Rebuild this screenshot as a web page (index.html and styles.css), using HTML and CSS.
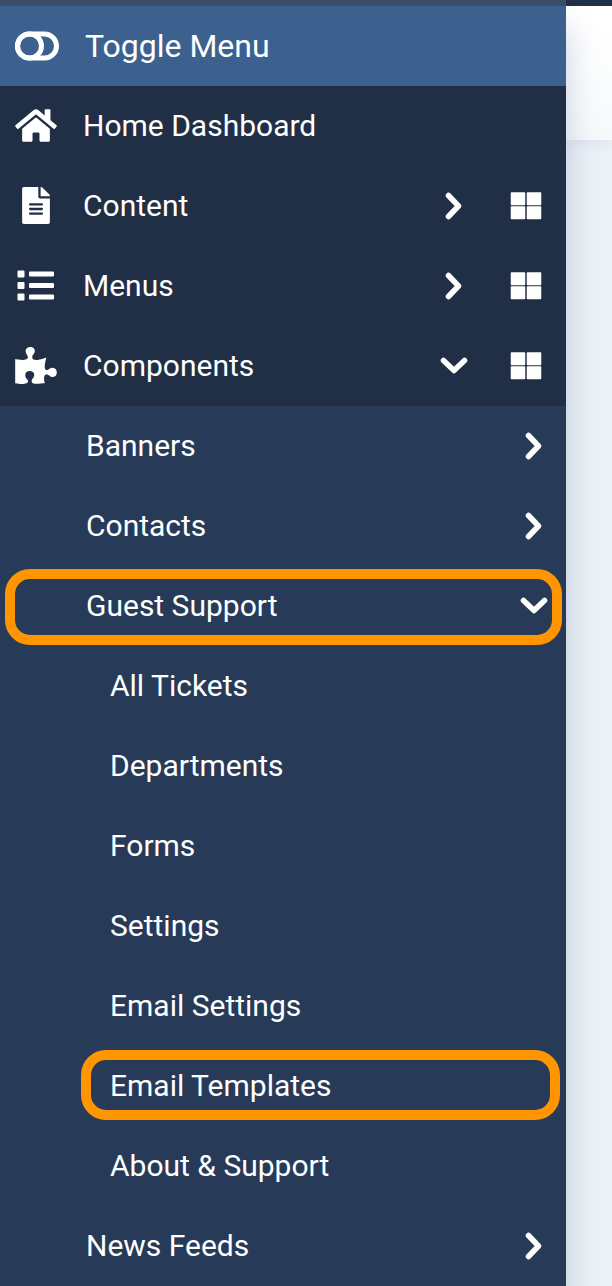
FILE: index.html
```html
<!DOCTYPE html>
<html lang="en">
<head>
    <meta charset="UTF-8">
    <meta name="viewport" content="width=device-width, initial-scale=1.0">
    <title>Home Dashboard</title>
    <link rel="stylesheet" href="styles.css">
</head>
<body>

    <!-- Shared icons -->
    <svg class="sprite" aria-hidden="true">
        <symbol id="chevron-right" viewBox="0 0 28 28">
            <path d="M8.500 3.500l10 10.500-10 10.500" fill="none" stroke="currentColor" stroke-width="5.500" stroke-linecap="round" stroke-linejoin="round"/>
        </symbol>
        <symbol id="chevron-down" viewBox="0 0 28 28">
            <path d="M3.500 8.500L14 18.500 24.500 8.500" fill="none" stroke="currentColor" stroke-width="5.500" stroke-linecap="round" stroke-linejoin="round"/>
        </symbol>
        <symbol id="grid" viewBox="0 0 32 28">
            <path d="M1.500 1h13v11.500h-13zM17.500 1h13v11.500h-13zM1.500 15h13v11.500h-13zM17.500 15h13v11.500h-13z" fill="currentColor" stroke="currentColor" stroke-width="1.500" stroke-linejoin="round"/>
        </symbol>
    </svg>

    <div class="topbar"><div class="topbar-brand"></div></div>

    <div class="wrapper">
        <nav class="sidebar" aria-label="Main menu">
            <button type="button" class="row toggle">
                <svg class="icon icon-toggle" viewBox="0 0 44 30">
                    <rect x="2.500" y="3" width="39" height="24" rx="12" fill="none" stroke="currentColor" stroke-width="5"/>
                    <circle cx="14.500" cy="15" r="12" fill="none" stroke="currentColor" stroke-width="5"/>
                </svg>
                <span class="label">Toggle Menu</span>
            </button>

            <ul class="menu">
                <li class="row">
                    <a href="#" class="link">
                        <svg class="icon" viewBox="0 0 576 512"><path fill="currentColor" d="M280.370 148.260L96 300.110V464a16 16 0 0 0 16 16l112.060-.29a16 16 0 0 0 15.920-16V368a16 16 0 0 1 16-16h64a16 16 0 0 1 16 16v95.640a16 16 0 0 0 16 16.050L464 480a16 16 0 0 0 16-16V300L295.670 148.260a12.190 12.190 0 0 0-15.300 0zM571.600 251.470L488 182.560V44.050a12 12 0 0 0-12-12h-56a12 12 0 0 0-12 12v72.610L318.470 43a48 48 0 0 0-61 0L4.340 251.470a12 12 0 0 0-1.600 16.900l25.500 31A12 12 0 0 0 45.150 301l235.220-193.740a12.190 12.190 0 0 1 15.300 0L530.900 301a12 12 0 0 0 16.900-1.600l25.500-31a12 12 0 0 0-1.700-16.930z"/></svg>
                        <span class="label">Home Dashboard</span>
                    </a>
                </li>
                <li class="row">
                    <button type="button" class="link" aria-expanded="false">
                        <svg class="icon" viewBox="-96 0 576 512"><path fill="currentColor" d="M224 136V0H24C10.700 0 0 10.700 0 24v464c0 13.300 10.700 24 24 24h336c13.300 0 24-10.700 24-24V160H248c-13.200 0-24-10.800-24-24zm64 236c0 6.600-5.400 12-12 12H108c-6.600 0-12-5.400-12-12v-8c0-6.600 5.400-12 12-12h168c6.600 0 12 5.400 12 12v8zm0-64c0 6.600-5.400 12-12 12H108c-6.600 0-12-5.400-12-12v-8c0-6.600 5.400-12 12-12h168c6.600 0 12 5.400 12 12v8zm0-72v8c0 6.600-5.400 12-12 12H108c-6.600 0-12-5.400-12-12v-8c0-6.600 5.400-12 12-12h168c6.600 0 12 5.400 12 12zm96-114.100v6.100H256V0h6.100c6.400 0 12.500 2.500 17 7l97.900 98c4.500 4.500 7 10.600 7 16.900z"/></svg>
                        <span class="label">Content</span>
                        <svg class="chevron"><use href="#chevron-right"/></svg>
                    </button>
                    <a href="#" class="dashboard" aria-label="Content Dashboard"><svg><use href="#grid"/></svg></a>
                </li>
                <li class="row">
                    <button type="button" class="link" aria-expanded="false">
                        <svg class="icon" viewBox="0 0 42 37"><path fill="currentColor" d="M3.500 3.500h5a1 1 0 0 1 1 1v5a1 1 0 0 1-1 1h-5a1 1 0 0 1-1-1v-5a1 1 0 0 1 1-1zM3.500 15h5a1 1 0 0 1 1 1v5a1 1 0 0 1-1 1h-5a1 1 0 0 1-1-1v-5a1 1 0 0 1 1-1zM3.500 26.500h5a1 1 0 0 1 1 1v5a1 1 0 0 1-1 1h-5a1 1 0 0 1-1-1v-5a1 1 0 0 1 1-1zM15 4.500h23a1 1 0 0 1 1 1v3a1 1 0 0 1-1 1H15a1 1 0 0 1-1-1v-3a1 1 0 0 1 1-1zM15 16h23a1 1 0 0 1 1 1v3a1 1 0 0 1-1 1H15a1 1 0 0 1-1-1v-3a1 1 0 0 1 1-1zM15 27.500h23a1 1 0 0 1 1 1v3a1 1 0 0 1-1 1H15a1 1 0 0 1-1-1v-3a1 1 0 0 1 1-1z"/></svg>
                        <span class="label">Menus</span>
                        <svg class="chevron"><use href="#chevron-right"/></svg>
                    </button>
                    <a href="#" class="dashboard" aria-label="Menus Dashboard"><svg><use href="#grid"/></svg></a>
                </li>
                <li class="row">
                    <button type="button" class="link" aria-expanded="true">
                        <svg class="icon" viewBox="0 0 576 512"><path fill="currentColor" d="M519.442 288.651c-41.519 0-59.500 31.593-82.058 31.593C377.409 320.244 432 144 432 144s-196.288 80-196.288-3.297c0-35.827 36.288-46.250 36.288-85.985C272 19.216 243.885 0 210.539 0c-34.654 0-66.366 18.891-66.366 56.346 0 41.364 31.711 59.277 31.711 81.750C175.885 207.719 0 166.758 0 166.758v333.237s178.635 41.047 178.635-28.662c0-22.473-40-40.107-40-81.471 0-37.456 29.250-56.346 63.577-56.346 33.673 0 61.788 19.216 61.788 54.717 0 39.735-36.288 50.158-36.288 85.985 0 60.803 129.675 25.730 181.230 25.730 0 0-34.725-120.101 25.827-120.101 35.962 0 46.423 36.152 86.308 36.152C556.712 416 576 387.990 576 354.443c0-34.199-18.962-65.792-56.558-65.792z"/></svg>
                        <span class="label">Components</span>
                        <svg class="chevron"><use href="#chevron-down"/></svg>
                    </button>
                    <a href="#" class="dashboard" aria-label="Components Dashboard"><svg><use href="#grid"/></svg></a>
                </li>
            </ul>

            <ul class="menu submenu">
                <li class="row">
                    <button type="button" class="link" aria-expanded="false">
                        <span class="label">Banners</span>
                        <svg class="chevron"><use href="#chevron-right"/></svg>
                    </button>
                </li>
                <li class="row">
                    <button type="button" class="link" aria-expanded="false">
                        <span class="label">Contacts</span>
                        <svg class="chevron"><use href="#chevron-right"/></svg>
                    </button>
                </li>
                <li class="row marked">
                    <button type="button" class="link" aria-expanded="true">
                        <span class="label">Guest Support</span>
                        <svg class="chevron"><use href="#chevron-down"/></svg>
                    </button>
                </li>
                <li>
                    <ul class="menu third-level">
                        <li class="row"><a href="#" class="link">All Tickets</a></li>
                        <li class="row"><a href="#" class="link">Departments</a></li>
                        <li class="row"><a href="#" class="link">Forms</a></li>
                        <li class="row"><a href="#" class="link">Settings</a></li>
                        <li class="row"><a href="#" class="link">Email Settings</a></li>
                        <li class="row marked"><a href="#" class="link">Email Templates</a></li>
                        <li class="row"><a href="#" class="link">About &amp; Support</a></li>
                    </ul>
                </li>
                <li class="row">
                    <button type="button" class="link" aria-expanded="false">
                        <span class="label">News Feeds</span>
                        <svg class="chevron"><use href="#chevron-right"/></svg>
                    </button>
                </li>
            </ul>
        </nav>

        <main class="content">
            <div class="subhead"></div>
        </main>
    </div>

</body>
</html>
```

FILE: styles.css
```css
* {
    box-sizing: border-box;
}

body {
    margin: 0;
    font-family: Roboto, sans-serif;
    font-size: 30px;
    line-height: 40px;
    color: #fff;
    background-color: #ebf1f6;
}

.sprite {
    position: absolute;
    width: 0;
    height: 0;
}

.topbar {
    position: relative;
    z-index: 2;
    height: 6px;
    padding-right: 46px;
    background-color: #202f45;
}

.topbar-brand {
    height: 100%;
    background-color: #3a4d6b;
}

.wrapper {
    display: flex;
    overflow: hidden;
}

.sidebar {
    position: relative;
    z-index: 1;
    flex: 1;
    background-color: #202f45;
    box-shadow: 0 20px 30px rgba(50, 75, 140, 0.25);
}

.menu {
    margin: 0;
    padding: 0;
    list-style: none;
}

.row {
    position: relative;
    display: flex;
    align-items: center;
    height: 80px;
}

button {
    border: none;
    background: none;
    font: inherit;
    color: inherit;
    text-align: left;
    cursor: pointer;
}

.link {
    display: flex;
    flex: 1;
    align-items: center;
    height: 80px;
    padding: 0 0 0 15px;
    color: #fff;
    text-decoration: none;
}

.toggle {
    width: 100%;
    padding: 0 15px;
    background-color: #3d618f;
    font-size: 32px;
}

.icon {
    width: 42px;
    height: 37px;
    margin: 0 26px 2px 0;
}

.icon-toggle {
    width: 44px;
    height: 30px;
    margin-bottom: 0;
}

.label {
    flex: 1;
}

.chevron {
    width: 28px;
    height: 28px;
}

.dashboard {
    display: flex;
    align-items: center;
    height: 80px;
    padding: 0 24px 0 42px;
    color: #fff;
}

.dashboard svg {
    width: 32px;
    height: 28px;
}

.submenu {
    background-color: #273b58;
}

.submenu .link {
    padding: 0 18px 0 86px;
}

.third-level .link {
    padding-left: 110px;
}

/* Orange frame round the items to follow */
.marked::after {
    content: "";
    position: absolute;
    top: 3px;
    right: 4px;
    bottom: 1px;
    left: 5px;
    border: 10px solid #ff9500;
    border-radius: 25px;
    pointer-events: none;
}

.third-level .marked::after {
    top: 4px;
    right: 6px;
    bottom: 6px;
    left: 81px;
}

.content {
    width: 46px;
}

.subhead {
    height: 134px;
    background: linear-gradient(to bottom, #fff 20px, #f6f9fb);
    box-shadow: 0 4px 10px #dfe5ef;
}
```
